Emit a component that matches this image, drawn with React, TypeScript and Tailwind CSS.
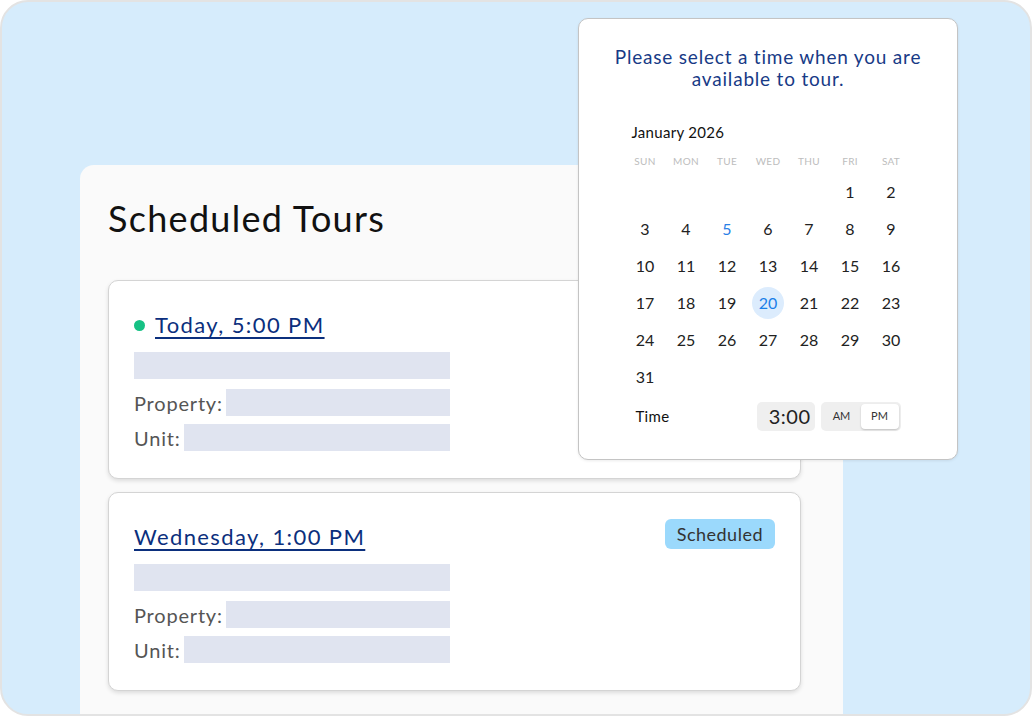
import React from 'react';

const FONT = { fontFamily: 'Lato, "Noto Sans", sans-serif' };

const DAYS = ['SUN', 'MON', 'TUE', 'WED', 'THU', 'FRI', 'SAT'];

// month grid starts on Friday in this picker
const CELLS: (number | null)[] = [
  ...Array(5).fill(null),
  ...Array.from({ length: 31 }, (_, i) => i + 1),
];

function TourCard({ title, live, badge }: { title: string; live?: boolean; badge?: string }) {
  return (
    <div className="bg-white border border-[#d4d4d4] rounded-[10px] shadow-[0_2px_4px_rgba(0,0,0,0.12)] px-[25px] pt-[29px] pb-[27px]">
      <div className="flex items-start justify-between h-[30px]">
        <div className="flex items-center gap-[10px] h-[30px]">
          {live && <span className="w-[11px] h-[11px] rounded-full bg-[#16c184]" />}
          <a className="text-[22px] leading-[30px] tracking-[1.4px] text-[#0b2f7d] underline decoration-[2px] underline-offset-[4px]">{title}</a>
        </div>
        {badge && (
          <span className="mt-[-3px] h-[30px] px-[12px] rounded-[6px] bg-[#9bd9fc] text-[18px] leading-[30px] tracking-[0.5px] text-[#333]">{badge}</span>
        )}
      </div>
      <div className="mt-[12px] flex flex-col w-[316px]">
        <div className="h-[27px] bg-[#e0e4f0]" />
        <div className="mt-[10px] flex items-center h-[27px]">
          <span className="text-[20px] tracking-[0.8px] text-[#555] pr-[3px]">Property:</span>
          <div className="flex-1 h-[27px] bg-[#e0e4f0]" />
        </div>
        <div className="mt-[8px] flex items-center h-[27px]">
          <span className="text-[20px] tracking-[0.8px] text-[#555] pr-[3px]">Unit:</span>
          <div className="flex-1 h-[27px] bg-[#e0e4f0]" />
        </div>
      </div>
    </div>
  );
}

function Calendar() {
  return (
    <div className="absolute left-[576px] top-[16px] w-[380px] h-[442px] bg-white border border-[#c4c4c4] rounded-[10px] shadow-[0_1px_3px_rgba(0,0,0,0.08)] pt-[27px]">
      <p className="text-center text-[19px] leading-[22px] tracking-[0.8px] text-[#183a86] px-[20px]">
        Please select a time when you are<br />available to tour.
      </p>
      <div className="w-[287px] mx-auto mt-[32px]">
        <div className="pl-[7px] text-[15px] leading-[20px] tracking-[0.3px] text-[#111]">January 2026</div>
        <div className="grid grid-cols-7 mt-[12px]">
          {DAYS.map(d => (
            <div key={d} className="text-center text-[10px] leading-[14px] text-[#bdbdbd] tracking-[0.3px]">{d}</div>
          ))}
        </div>
        <div className="grid grid-cols-7 mt-[5px]">
          {CELLS.map((n, i) => (
            <div key={i} className="h-[37px] flex items-center justify-center">
              {n === 20 ? (
                <span className="w-[32px] h-[32px] rounded-full bg-[#dcecfd] flex items-center justify-center text-[16px] text-[#1b7fe8]">{n}</span>
              ) : (
                <span className={`text-[16px] ${n === 5 ? 'text-[#2a80e6]' : 'text-[#222]'}`}>{n ?? ''}</span>
              )}
            </div>
          ))}
        </div>
        <div className="mt-[7px] px-[11px] flex items-center justify-between h-[29px]">
          <span className="text-[15px] tracking-[0.3px] text-[#111]">Time</span>
          <div className="flex items-center gap-[6px]">
            <div className="w-[58px] h-[29px] rounded-[5px] bg-[#efefef] text-right pr-[4px] text-[20px] leading-[29px] tracking-[0.5px] text-[#222]">3:00</div>
            <div className="w-[80px] h-[29px] rounded-[5px] bg-[#efefef] flex items-center p-[2px]">
              <span className="flex-1 text-center text-[11px] text-[#333]">AM</span>
              <span className="w-[38px] h-[25px] rounded-[4px] bg-white shadow-[0_1px_2px_rgba(0,0,0,0.2)] flex items-center justify-center text-[11px] text-[#333]">PM</span>
            </div>
          </div>
        </div>
      </div>
    </div>
  );
}

export default function App() {
  return (
    <div style={FONT} className="relative w-[1032px] h-[716px] overflow-hidden rounded-[28px] border-2 border-[#e3e3e3] bg-[#d6ecfc]">
      <div className="ml-[78px] mt-[163px] w-[763px] h-[560px] bg-[#fafafa] rounded-t-[14px] px-[28px] pt-[31px]">
        <h1 className="text-[36px] leading-[44px] tracking-[1.3px] text-[#111]">Scheduled Tours</h1>
        <div className="mt-[40px] flex flex-col gap-[13px] w-[693px]">
          <TourCard title="Today, 5:00 PM" live />
          <TourCard title="Wednesday, 1:00 PM" badge="Scheduled" />
        </div>
      </div>
      <Calendar />
    </div>
  );
}
